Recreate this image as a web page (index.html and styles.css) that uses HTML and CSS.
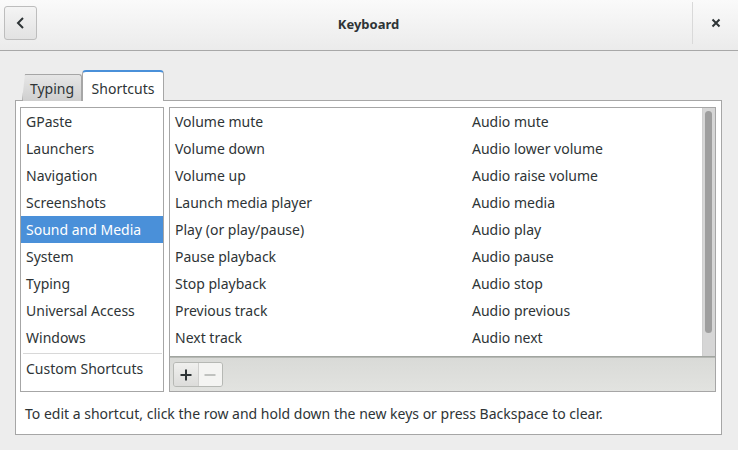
FILE: index.html
```html
<!DOCTYPE html>
<html>
<head>
<meta charset="utf-8">
<link rel="stylesheet" href="styles.css">
</head>
<body>
<div class="window">
  <header class="headerbar">
    <button class="back-btn" aria-label="Back">
      <svg width="12" height="14" viewBox="0 0 12 14"><path d="M8 2 L3 7 L8 12" fill="none" stroke="#2e3436" stroke-width="2"/></svg>
    </button>
    <div class="title">Keyboard</div>
    <div class="sep"></div>
    <button class="close-btn" aria-label="Close">
      <svg width="10" height="10" viewBox="0 0 10 10"><path d="M1.5 1.5 L8.5 8.5 M8.5 1.5 L1.5 8.5" stroke="#2e3436" stroke-width="2"/></svg>
    </button>
  </header>
  <main class="content">
    <div class="tabs">
      <div class="tab tab-inactive">Typing</div>
      <div class="tab tab-active">Shortcuts</div>
    </div>
    <div class="notebook">
      <div class="panes">
        <div class="sections">
          <div class="srow">GPaste</div>
          <div class="srow">Launchers</div>
          <div class="srow">Navigation</div>
          <div class="srow">Screenshots</div>
          <div class="srow selected">Sound and Media</div>
          <div class="srow">System</div>
          <div class="srow">Typing</div>
          <div class="srow">Universal Access</div>
          <div class="srow">Windows</div>
          <div class="ssep"></div>
          <div class="srow custom">Custom Shortcuts</div>
        </div>
        <div class="shortcuts">
          <div class="scroll">
            <div class="rows">
              <div class="row"><span class="c1">Volume mute</span><span class="c2">Audio mute</span></div>
              <div class="row"><span class="c1">Volume down</span><span class="c2">Audio lower volume</span></div>
              <div class="row"><span class="c1">Volume up</span><span class="c2">Audio raise volume</span></div>
              <div class="row"><span class="c1">Launch media player</span><span class="c2">Audio media</span></div>
              <div class="row"><span class="c1">Play (or play/pause)</span><span class="c2">Audio play</span></div>
              <div class="row"><span class="c1">Pause playback</span><span class="c2">Audio pause</span></div>
              <div class="row"><span class="c1">Stop playback</span><span class="c2">Audio stop</span></div>
              <div class="row"><span class="c1">Previous track</span><span class="c2">Audio previous</span></div>
              <div class="row"><span class="c1">Next track</span><span class="c2">Audio next</span></div>
            </div>
            <div class="scrollbar"><div class="thumb"></div></div>
          </div>
          <div class="toolbar">
            <div class="btngroup">
              <div class="tbtn add">
                <svg width="12" height="12" viewBox="0 0 12 12"><path d="M6 0.5 V11.5 M0.5 6 H11.5" stroke="#2e3436" stroke-width="2"/></svg>
              </div>
              <div class="tbtn remove">
                <svg width="12" height="12" viewBox="0 0 12 12"><path d="M0.5 6 H11.5" stroke="#c0c2bf" stroke-width="2"/></svg>
              </div>
            </div>
          </div>
        </div>
      </div>
      <p class="hint">To edit a shortcut, click the row and hold down the new keys or press Backspace to clear.</p>
    </div>
  </main>
</div>
</body>
</html>
```

FILE: styles.css
```css
* { box-sizing: border-box; }
html, body { margin: 0; padding: 0; }
body {
  width: 738px;
  height: 450px;
  background: #ededed;
  font-family: "Noto Sans", "DejaVu Sans", sans-serif;
  font-size: 14px;
  color: #2e3436;
  overflow: hidden;
}
.window { display: flex; flex-direction: column; height: 450px; }

.headerbar {
  height: 51px;
  flex: none;
  display: flex;
  align-items: center;
  background: linear-gradient(#fafafa, #ebebeb);
  border-bottom: 1px solid #a8a8a8;
  padding: 0 0 0 4px;
}
.back-btn {
  width: 33px;
  height: 34px;
  margin-top: -5px;
  border: 1px solid #bdbdbd;
  border-radius: 3px;
  background: linear-gradient(#f4f4f4, #e2e2e2);
  display: flex;
  align-items: center;
  justify-content: center;
  padding: 0;
}
.title {
  flex: 1;
  text-align: center;
  font-weight: bold;
  font-size: 13px;
  margin-top: -3px;
  padding-left: 8px;
}
.sep {
  width: 1px;
  height: 42px;
  margin-top: -4px;
  background: #d9d9d9;
}
.close-btn {
  width: 45px;
  height: 34px;
  margin-top: -5px;
  border: none;
  background: transparent;
  display: flex;
  align-items: center;
  justify-content: center;
  padding: 0;
}

.content {
  flex: 1;
  padding: 20px 16px 15px 15px;
  display: flex;
  flex-direction: column;
}
.tabs {
  display: flex;
  align-items: flex-end;
  height: 30px;
  padding-left: 7px;
  margin-bottom: -1px;
  position: relative;
  z-index: 1;
}
.tab {
  display: flex;
  align-items: center;
  justify-content: center;
}
.tab-inactive {
  width: 60px;
  height: 27px;
  background: linear-gradient(#e6e6e6, #cfcfcf);
  border: 1px solid #a6a6a6;
  border-bottom: none;
  border-radius: 4px 3px 0 0;
  clip-path: polygon(3px 0, 100% 0, 100% 100%, 0 100%);
  padding-top: 1px;
}
.tab-active {
  width: 82px;
  height: 31px;
  background: #fff;
  border: 1px solid #a6a6a6;
  border-top: 2px solid #4a90d9;
  border-bottom: none;
  border-radius: 4px 4px 0 0;
  padding-top: 3px;
}
.notebook {
  flex: 1;
  background: #fff;
  border: 1px solid #a6a6a6;
  display: flex;
  flex-direction: column;
  padding: 6px 5px 0 4px;
}
.panes {
  display: flex;
  gap: 5px;
  height: 285px;
}
.sections {
  width: 144px;
  border: 1px solid #a6a6a6;
  display: flex;
  flex-direction: column;
}
.srow {
  height: 27px;
  line-height: 28px;
  padding-left: 5px;
  white-space: nowrap;
}
.srow.selected { background: #4a90d9; color: #fff; }
.ssep {
  height: 1px;
  background: #d8d8d8;
  margin: 2px 0 2px 2px;
  width: 139px;
}
.srow.custom { height: 26px; line-height: 26px; }

.shortcuts {
  flex: 1;
  border: 1px solid #a6a6a6;
  display: flex;
  flex-direction: column;
}
.scroll {
  flex: 1;
  display: flex;
  border-bottom: 1px solid #a1a5a0;
}
.rows { flex: 1; }
.row {
  height: 27px;
  line-height: 28px;
  display: flex;
  padding-left: 5px;
  white-space: nowrap;
}
.c1 { width: 297px; }
.scrollbar {
  width: 13px;
  background: #d6d6d6;
  border-left: 1px solid #cfcfcf;
  padding: 3px 3px 0 2px;
}
.thumb {
  height: 222px;
  background: #9e9e9e;
  border-radius: 4px;
}
.toolbar {
  height: 34px;
  background: linear-gradient(#d9dad7, #e2e3e0);
  border-top: 1px solid #b6b8b4;
  padding: 4px 0 0 3px;
}
.btngroup {
  display: flex;
  width: 50px;
  height: 25px;
  border: 1px solid #b6b8b4;
  border-radius: 3px;
  overflow: hidden;
}
.tbtn {
  flex: 1;
  display: flex;
  align-items: center;
  justify-content: center;
}
.tbtn.add {
  background: linear-gradient(#f0f0ee, #dcdcda);
  border-right: 1px solid #d0d0ce;
}
.tbtn.remove { background: #f4f4f2; }

.hint {
  margin: 0;
  padding: 12px 0 0 5px;
}
```
